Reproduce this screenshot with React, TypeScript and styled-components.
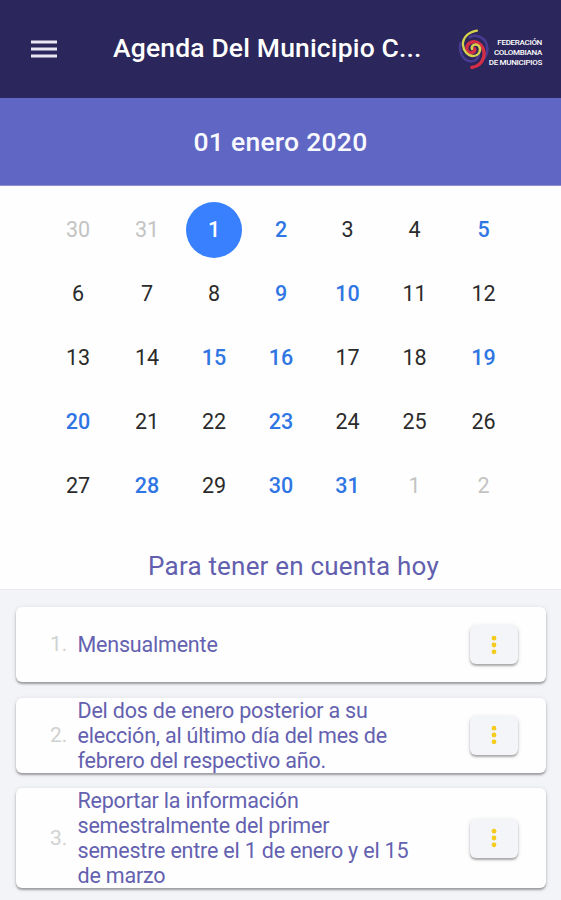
import React from 'react';
import styled, { createGlobalStyle, css } from 'styled-components';

const GlobalStyle = createGlobalStyle`
  * { box-sizing: border-box; }
  html, body { margin: 0; padding: 0; }
  body {
    height: 900px;
    overflow: hidden;
    background: #f2f3f8;
    font-family: Roboto, sans-serif;
  }
`;

const Screen = styled.main`
  width: 561px;
  height: 900px;
  display: flex;
  flex-direction: column;
  overflow: hidden;
`;

const Toolbar = styled.header`
  flex: none;
  height: 98px;
  display: flex;
  align-items: center;
  background: #2b265b;
  color: #fff;
`;

const MenuButton = styled.button`
  width: 113px;
  height: 60px;
  padding: 0 0 0 31px;
  border: 0;
  background: none;
  color: #e9e8f2;
  display: flex;
  align-items: center;
`;

const Title = styled.h1`
  margin: 0;
  width: 345px;
  font-size: 26.5px;
  line-height: 34px;
  padding-bottom: 2px;
  font-weight: 500;
  letter-spacing: 0.15px;
  white-space: nowrap;
`;

const Brand = styled.div`
  display: flex;
  align-items: center;
  width: 84px;
`;

const BrandName = styled.div`
  flex: 1;
  margin-top: 8px;
  font-size: 8px;
  line-height: 10px;
  font-weight: 500;
  letter-spacing: -0.3px;
  white-space: nowrap;
  display: flex;
  flex-direction: column;
  align-items: flex-end;
`;

const DateBar = styled.section`
  flex: none;
  height: 88px;
  display: flex;
  align-items: center;
  justify-content: center;
  background: #5f66c3;
  border-bottom: 1px solid #8c8ed0;
  color: #f8f9ff;
  font-size: 26.5px;
  font-weight: 500;
  letter-spacing: 0.25px;
`;

const CalendarPanel = styled.section`
  flex: none;
  height: 403px;
  padding-top: 12px;
  background: #fefefe;
`;

const Days = styled.div`
  display: grid;
  grid-template-columns: 69px 69px 65px 69px 64px 70px 68px;
  grid-auto-rows: 64px;
  padding-left: 43.5px;
`;

type DayKind = 'normal' | 'muted' | 'event' | 'selected';

const Day = styled.div<{ $kind: DayKind }>`
  display: flex;
  align-items: center;
  justify-content: center;
  padding-bottom: 2px;
  font-size: 21.5px;
  color: #2b2b2b;
  ${({ $kind }) => $kind === 'muted' && css`color: #c3c3c3;`}
  ${({ $kind }) => $kind === 'event' && css`color: #2f76e4; font-weight: 500;`}
  ${({ $kind }) => $kind === 'selected' && css`color: #fff; font-weight: 500; padding-bottom: 0;`}
`;

const SelectedDisc = styled.span`
  flex: none;
  width: 56px;
  height: 56px;
  padding-bottom: 2px;
  border-radius: 50%;
  background: #3880fe;
  display: flex;
  align-items: center;
  justify-content: center;
`;

const Heading = styled.h2`
  margin: 30px 0 0;
  padding-left: 26px;
  text-align: center;
  font-size: 26px;
  line-height: 36px;
  font-weight: 400;
  letter-spacing: 0.2px;
  color: #6260ae;
`;

const List = styled.section`
  flex: 1;
  padding: 17px 15px 0 16px;
  border-top: 1px solid #ebecef;
  background: #f3f4f8;
  display: flex;
  flex-direction: column;
  gap: 15.5px;
`;

const Card = styled.article<{ $height: number }>`
  flex: none;
  height: ${({ $height }) => $height}px;
  display: flex;
  align-items: center;
  padding: 0 28px 0 34px;
  border-radius: 6px;
  background: #fefefe;
  box-shadow: 0 2px 2px rgba(0, 0, 0, 0.3), 0 1px 5px rgba(0, 0, 0, 0.12);
`;

const Index = styled.span`
  width: 27.5px;
  font-size: 21px;
  line-height: 25px;
  color: #d0d2d2;
`;

const CardText = styled.p`
  margin: 0;
  flex: 1;
  font-size: 21.5px;
  line-height: 25px;
  letter-spacing: -0.2px;
  color: #6461b0;
  white-space: pre-line;
`;

const MoreButton = styled.button`
  flex: none;
  width: 48px;
  height: 39px;
  padding: 0;
  border: 0;
  border-radius: 6px;
  background: #f4f5f8;
  box-shadow: 0 2px 2px rgba(0, 0, 0, 0.28), 0 1px 5px rgba(0, 0, 0, 0.12);
  display: flex;
  align-items: center;
  justify-content: center;
`;

const MenuIcon = () => (
  <svg width="26" height="18" viewBox="0 0 26 18" fill="currentColor">
    <path d="M0 .5h26v3H0zM0 7.5h26v3H0zM0 14.5h26v3H0z" />
  </svg>
);

const MoreIcon = () => (
  <svg width="6" height="20" viewBox="0 0 6 20" fill="#f5cb1d">
    <circle cx="3" cy="3.2" r="2.4" />
    <circle cx="3" cy="10" r="2.4" />
    <circle cx="3" cy="16.8" r="2.4" />
  </svg>
);

const SpiralLogo = () => (
  <svg width="31" height="40" viewBox="0 0 31 40" fill="none" strokeLinecap="round">
    <path d="M2.5 14C.5 23 5 32 13 32.5C18 32.5 21 29 21 25" stroke="#493b91" strokeWidth="2.6" />
    <path d="M12 8C20 4 29 10 29.5 19C30 25 27 29 24 31" stroke="#493b91" strokeWidth="2.6" />
    <path d="M14 38.5C23 37 27.5 30 26 22C24.500 15 18 11 12.500 13.500C7.500 16 8 23 12 24C15 24.5 18 22 16.5 19.5" stroke="#d42d46" strokeWidth="3.4" />
    <path d="M19 1.5C10 3 4.500 9 5 16C5.500 22 10 27 15 27C21 27 24 21 21 17C18 14 13 16 14 20" stroke="#d5d34d" strokeWidth="2.4" />
  </svg>
);

const monthDays = Array.from({ length: 31 }, (_, i) => i + 1);
const eventDays = new Set([2, 5, 9, 10, 15, 16, 19, 20, 23, 28, 30, 31]);

const cells: { day: number; kind: DayKind }[] = [
  { day: 30, kind: 'muted' },
  { day: 31, kind: 'muted' },
  ...monthDays.map((day) => ({
    day,
    kind: (day === 1 ? 'selected' : eventDays.has(day) ? 'event' : 'normal') as DayKind,
  })),
  { day: 1, kind: 'muted' },
  { day: 2, kind: 'muted' },
];

const tasks = [
  { height: 75, text: 'Mensualmente' },
  { height: 75, text: 'Del dos de enero posterior a su\nelección, al último día del mes de\nfebrero del respectivo año.' },
  { height: 100, text: 'Reportar la información\nsemestralmente del primer\nsemestre entre el 1 de enero y el 15\nde marzo' },
];

export default function App() {
  return (
    <>
      <GlobalStyle />
      <Screen>
        <Toolbar>
          <MenuButton aria-label="Menú"><MenuIcon /></MenuButton>
          <Title>Agenda Del Municipio C...</Title>
          <Brand>
            <SpiralLogo />
            <BrandName>
              <span>FEDERACIÓN</span>
              <span>COLOMBIANA</span>
              <span>DE MUNICIPIOS</span>
            </BrandName>
          </Brand>
        </Toolbar>
        <DateBar>01 enero 2020</DateBar>
        <CalendarPanel>
          <Days>
            {cells.map(({ day, kind }, i) => (
              <Day key={i} $kind={kind}>
                {kind === 'selected' ? <SelectedDisc>{day}</SelectedDisc> : day}
              </Day>
            ))}
          </Days>
          <Heading>Para tener en cuenta hoy</Heading>
        </CalendarPanel>
        <List>
          {tasks.map(({ height, text }, i) => (
            <Card key={text} $height={height}>
              <Index>{i + 1}.</Index>
              <CardText>{text}</CardText>
              <MoreButton aria-label="Opciones"><MoreIcon /></MoreButton>
            </Card>
          ))}
        </List>
      </Screen>
    </>
  );
}
